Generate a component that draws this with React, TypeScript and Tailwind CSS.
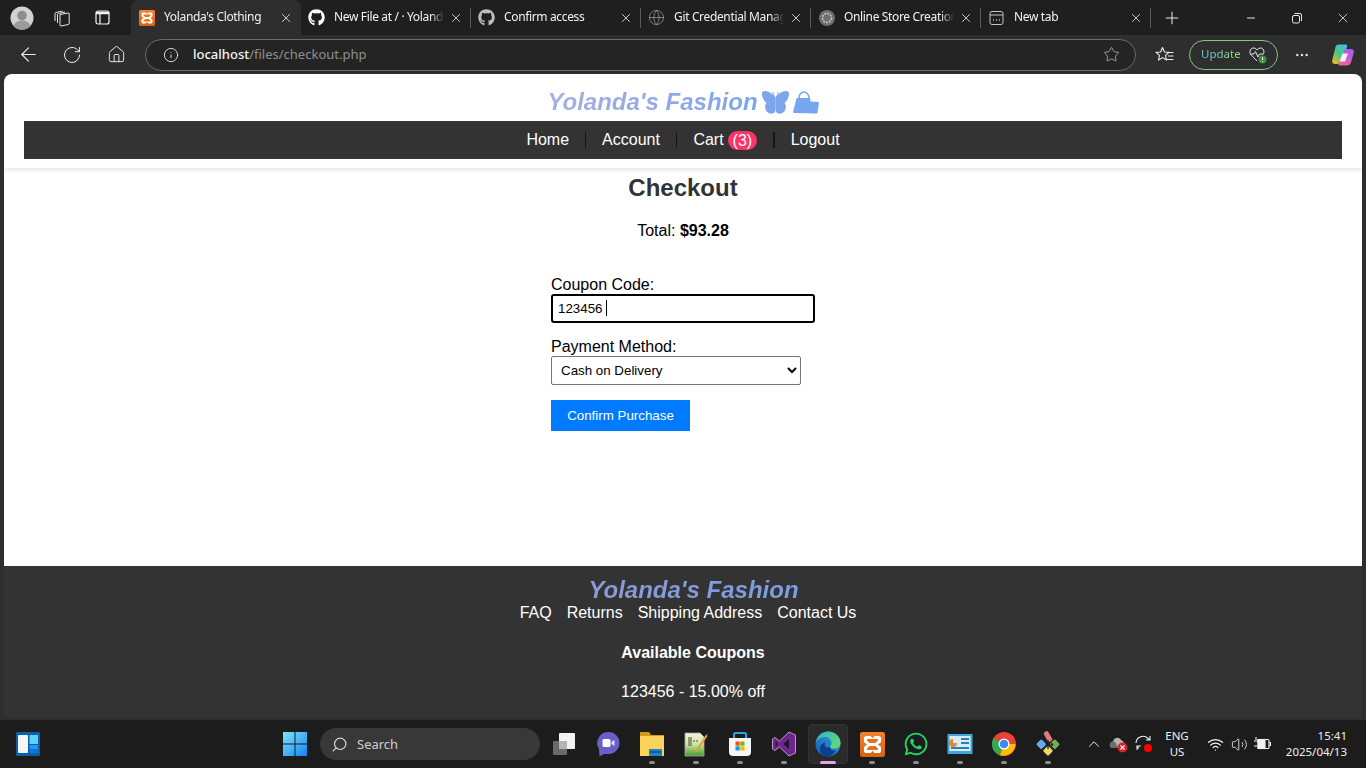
import { ArrowLeft, RotateCw, Home, Info, Star, MoreHorizontal, Plus, X, Minus, ChevronUp, Wifi, Volume2, Search, Globe } from 'lucide-react';
import { FaGithub, FaWhatsapp } from 'react-icons/fa';
import type { ReactNode } from 'react';

const chromeFont = "font-['Noto_Sans',sans-serif]";

function XamppIcon({ size = 16, id }: { size?: number; id: string }) {
  return (
    <svg width={size} height={size} viewBox="0 0 16 16">
      <defs>
        <linearGradient id={id} x1="0" y1="0" x2="0" y2="1">
          <stop offset="0" stopColor="#f9802a" />
          <stop offset="1" stopColor="#d4640f" />
        </linearGradient>
      </defs>
      <rect width="16" height="16" rx="1.500" fill={`url(#${id})`} />
      <path d="M4 2.500h2.300c.6 0 .9.400 1.200.9l.5.600.5-.6c.3-.5.6-.9 1.200-.9H12c.9 0 1.500.7 1.500 1.500v1.700c0 .7-.3 1.100-.8 1.400L11.500 8l1.200.9c.5.300.8.700.8 1.400V12c0 .8-.6 1.500-1.500 1.500H9.700c-.6 0-.9-.4-1.200-.9L8 12l-.5.600c-.3.500-.6.900-1.200.9H4c-.9 0-1.500-.7-1.500-1.500v-1.700c0-.7.3-1.100.8-1.400L4.500 8 3.300 7.100c-.5-.3-.8-.7-.8-1.400V4c0-.8.6-1.500 1.500-1.500z" fill="#fff" />
      <path d="M4.500 4.500h7v1L9.800 7H6.200L4.500 5.500zM6.200 9h3.600l1.700 1.500v1h-7v-1z" fill="#e8701a" />
    </svg>
  );
}

function ProfileIcon() {
  return (
    <svg width="24" height="24" viewBox="0 0 24 24">
      <circle cx="12" cy="12" r="11.5" fill="#d2d2d2" />
      <circle cx="12" cy="9.5" r="4.8" fill="#8e8e8e" />
      <path d="M3.500 20c1.500-4 5-5.500 8.500-5.500s7 1.500 8.500 5.500a11.500 11.500 0 0 1-17 0z" fill="#9a9a9a" />
    </svg>
  );
}

function WorkspacesIcon() {
  return (
    <svg width="18" height="18" viewBox="0 0 18 18" fill="none" stroke="#e8e8e8" strokeWidth="1">
      <path d="M7 5.500l8-1.500a1 1 0 0 1 1.200 1v9.500a1 1 0 0 1-.8 1L8 17a1 1 0 0 1-1-1z" />
      <path d="M4.500 14V5.500a1 1 0 0 1 .8-1L12 3" />
      <path d="M2 12V4.500a1 1 0 0 1 .8-1L9.500 2" />
    </svg>
  );
}

function TabActionsIcon() {
  return (
    <svg width="15" height="15" viewBox="0 0 15 15" fill="none" stroke="#f4f4f4" strokeWidth="1.200">
      <rect x="1" y="1" width="13" height="13" rx="2" />
      <path d="M1 3h13" strokeWidth="2.500" />
      <path d="M5 3v11" />
    </svg>
  );
}

function NewTabIcon() {
  return (
    <svg width="15" height="16" viewBox="0 0 15 16" fill="none" stroke="#c4c4c4" strokeWidth="1">
      <rect x="1" y="1.500" width="13" height="13" rx="2" />
      <path d="M1 5h13" />
      <path d="M4 10h1M7 10h1M10 10h1" strokeWidth="1.300" />
    </svg>
  );
}

function RestoreIcon() {
  return (
    <svg width="12" height="12" viewBox="0 0 12 12" fill="none" stroke="#e8e8e8" strokeWidth="1">
      <rect x="1.500" y="3.500" width="7" height="7.500" rx="1.500" />
      <path d="M3.500 1.500h5.500a1.500 1.500 0 0 1 1.500 1.500v6" />
    </svg>
  );
}

function OpenAiIcon() {
  return (
    <svg width="16" height="16" viewBox="0 0 16 16">
      <circle cx="8" cy="8" r="8" fill="#6f6f6f" />
      <circle cx="8" cy="8" r="4.500" fill="none" stroke="#c4c4c4" strokeWidth="1.600" strokeDasharray="2 1" />
    </svg>
  );
}

function FavoritesIcon() {
  return (
    <svg width="20" height="18" viewBox="0 0 20 18" fill="none" stroke="#ececec" strokeWidth="1.100" strokeLinejoin="round">
      <path d="M7.500 1.500 9.400 6l4.600.4-3.500 3 1 4.600-4-2.400-4 2.400 1-4.600-3.500-3L5.600 6z" />
      <path d="M14 6.500h4.500M13 10h5.500M11.500 13.500h7" />
    </svg>
  );
}

function CopilotIcon() {
  return (
    <svg width="24" height="24" viewBox="0 0 24 24">
      <defs>
        <linearGradient id="cp1" x1="0.800" y1="0" x2="0.100" y2="1">
          <stop offset="0" stopColor="#38c3e8" />
          <stop offset="0.500" stopColor="#48c97a" />
          <stop offset="1" stopColor="#f5b52e" />
        </linearGradient>
        <linearGradient id="cp2" x1="0.800" y1="0" x2="0.200" y2="1">
          <stop offset="0" stopColor="#9a5ff0" />
          <stop offset="0.600" stopColor="#d85fc0" />
          <stop offset="1" stopColor="#f2607a" />
        </linearGradient>
      </defs>
      <path d="M7.500 1.500h7c1.500 0 2 1.200 1.500 2.500l-5 15c-.5 1.500-1.500 2-3 2H4c-2 0-3.300-1.500-2.800-3.500L4.500 4c.4-1.500 1.500-2.500 3-2.500z" fill="url(#cp1)" />
      <path d="M15.500 6H20c2.200 0 3.400 1.500 2.800 3.500L20 19.500c-.6 2-2 3-4 3H9c-1.500 0-2-1-1.500-2L13 8c.4-1.300 1.200-2 2.500-2z" fill="url(#cp2)" />
      <path d="M11.500 10.500h5.500l-3 8H8.500z" fill="#ffffff" opacity="0.92" />
    </svg>
  );
}

function HeartbeatBadge() {
  return (
    <svg width="20" height="20" viewBox="0 0 20 20" fill="none">
      <path d="M9 16 2.800 9.500C.5 6.500 3 2.500 6 3c1.500.2 2.300 1 3 2 .8-1 1.700-1.800 3.200-2 3-.3 5 3.500 2.800 6.500" stroke="#e2e2e2" strokeWidth="1" />
      <path d="M2 9h4l1.500-2.500L10 12l1.500-3H15" stroke="#e2e2e2" strokeWidth="1" />
      <circle cx="14.500" cy="14.500" r="4" fill="#3f9142" />
      <path d="M14.500 12.300v2.700M14.500 16v.8" stroke="#fff" strokeWidth="1" />
    </svg>
  );
}

function Butterfly() {
  return (
    <svg width="29" height="25" viewBox="0 0 29 25" className="text-[#7da6ee]" fill="currentColor">
      <path d="M14.500 8C17 4 21 1 25 1c2.800 0 3.600 2 2.800 5-1 3.500-2.300 5.500-4.300 7 1.500 1.500 2 4.500.5 7.500-1.500 3-5.500 4-8 2.500-1.200-.8-1.500-3-1.500-5z" />
      <path d="M14.500 8C12 4 8 1 4 1 1.200 1 .4 3 1.200 6c1 3.500 2.300 5.500 4.300 7-1.500 1.500-2 4.500-.5 7.500 1.500 3 5.500 4 8 2.500 1.200-.8 1.500-3 1.500-5z" />
      <path d="M14 8l-2.500-6M15 8l2.500-6" stroke="currentColor" strokeWidth="1" fill="none" />
    </svg>
  );
}

function BagIcon() {
  return (
    <svg width="26" height="23" viewBox="0 0 26 23" className="text-[#78a6ee]">
      <path d="M6 8C6 3 8.500 1 11 1s4.500 2 5.500 7" fill="none" stroke="currentColor" strokeWidth="1.500" />
      <path d="M4.500 7H17l.5 3.500 7.500.5c.7 0 1 .5.9 1.200l-1.400 9.300c-.1.700-.5 1-1.200 1L1 22c-.7 0-1-.5-.9-1.200L3.200 8.200C3.400 7.400 3.800 7 4.500 7z" fill="currentColor" />
    </svg>
  );
}

function WindowsLogo() {
  return (
    <svg width="24" height="24" viewBox="0 0 24 24">
      <defs>
        <linearGradient id="win" x1="0" y1="0" x2="1" y2="1">
          <stop offset="0" stopColor="#7fe3fb" />
          <stop offset="1" stopColor="#0f86f0" />
        </linearGradient>
      </defs>
      <path d="M0 0h11.500v11.500H0zM12.500 0H24v11.500H12.500zM0 12.500h11.500V24H0zM12.500 12.500H24V24H12.500z" fill="url(#win)" />
    </svg>
  );
}

function WidgetsIcon() {
  return (
    <svg width="24" height="24" viewBox="0 0 24 24">
      <rect width="24" height="24" rx="1" fill="#0f5fa8" />
      <rect x="2" y="3" width="10" height="18" rx="1" fill="#f5f5f5" />
      <rect x="13.500" y="3" width="8.500" height="9" fill="#5fd0fb" />
      <rect x="13.500" y="13" width="8.500" height="4" fill="#1e9bf0" />
      <rect x="13.500" y="17" width="8.500" height="4" fill="#0f78d4" />
    </svg>
  );
}

function TaskViewIcon() {
  return (
    <svg width="24" height="24" viewBox="0 0 24 24">
      <rect x="1" y="9" width="14" height="14" rx="1" fill="#6a6a6a" />
      <rect x="7" y="1" width="16" height="16" rx="1" fill="#f2f2f2" />
      <rect x="7" y="9" width="8" height="8" fill="#b4b4b4" />
    </svg>
  );
}

function MeetIcon() {
  return (
    <svg width="24" height="26" viewBox="0 0 24 26">
      <path d="M12.500 1a11 11 0 0 1 0 22H8l-4.500 2.500L3 18A11 11 0 0 1 12.500 1z" fill="#6a5fc8" />
      <rect x="6.500" y="8" width="8" height="8" rx="1.500" fill="#fff" />
      <path d="M15.500 11l3-2v6l-3-2z" fill="#e6e2ff" />
    </svg>
  );
}

function ExplorerIcon() {
  return (
    <svg width="26" height="26" viewBox="0 0 26 26">
      <path d="M1 1h9l2 3h13v3H1z" fill="#d39a16" />
      <rect x="1" y="5" width="24" height="20" fill="#fbd35a" />
      <rect x="10" y="18" width="13" height="7" fill="#1b86cc" />
      <rect x="11" y="20" width="11" height="2" fill="#0c5c99" />
    </svg>
  );
}

function NotepadIcon() {
  return (
    <svg width="24" height="26" viewBox="0 0 24 26">
      <defs>
        <linearGradient id="padg" x1="0" y1="0" x2="0" y2="1">
          <stop offset="0" stopColor="#f2f6e4" />
          <stop offset="0.500" stopColor="#cfe29a" />
          <stop offset="1" stopColor="#3f9c2e" />
        </linearGradient>
      </defs>
      <path d="M1 2h15l4 4v19H1z" fill="url(#padg)" stroke="#a8a8a8" strokeWidth="0.800" />
      <path d="M5 6v9M7 6v9" stroke="#444" strokeWidth="1" />
      <path d="M9 10h5" stroke="#555" strokeWidth="1" strokeDasharray="2 1" />
      <path d="M22 3.500 12 19l-1.500 3 3-1.500L23.500 5z" fill="#e2a23a" />
      <path d="M22 3.500 23.500 5l.5-2.500z" fill="#a03020" />
    </svg>
  );
}

function StoreIcon() {
  return (
    <svg width="24" height="26" viewBox="0 0 24 26">
      <path d="M6 8V3.500A1.500 1.500 0 0 1 7.500 2h9A1.500 1.500 0 0 1 18 3.500V8" fill="none" stroke="#27a5e8" strokeWidth="2" />
      <path d="M1 7h22v14a4 4 0 0 1-4 4H5a4 4 0 0 1-4-4z" fill="#f5f5f5" />
      <rect x="7.500" y="10.500" width="4.200" height="4.200" fill="#f25022" />
      <rect x="12.300" y="10.500" width="4.200" height="4.200" fill="#7fba00" />
      <rect x="7.500" y="15.300" width="4.200" height="4.200" fill="#00a4ef" />
      <rect x="12.300" y="15.300" width="4.200" height="4.200" fill="#ffb900" />
    </svg>
  );
}

function VisualStudioIcon() {
  return (
    <svg width="24" height="26" viewBox="0 0 24 26">
      <path d="M17 1 23.500 4v18L17 25l-9.500-9-4.500 3.500L.5 18V8L3 6.500 7.500 10z" fill="#6e2590" stroke="#d7b8e6" strokeWidth="0.800" strokeLinejoin="round" />
      <path d="M17 8 11.500 13l5.500 5zM3.500 10v6L6 13z" fill="#1c1c1c" />
    </svg>
  );
}

function EdgeIcon() {
  return (
    <svg width="26" height="26" viewBox="0 0 26 26">
      <defs>
        <linearGradient id="edgeA" x1="0" y1="1" x2="1" y2="0">
          <stop offset="0" stopColor="#1a5bb5" />
          <stop offset="1" stopColor="#2aa6d8" />
        </linearGradient>
        <linearGradient id="edgeB" x1="0" y1="0" x2="1" y2="1">
          <stop offset="0" stopColor="#2fb6c8" />
          <stop offset="1" stopColor="#6fdc6a" />
        </linearGradient>
      </defs>
      <circle cx="13" cy="13" r="12.500" fill="url(#edgeA)" />
      <path d="M1 11C2.500 4.500 8 .5 13 .5c7 0 12.500 5 12.500 11.500 0 3.500-3 5.500-6.500 5.500-2.500 0-4-1-4-1.800 0-.8 1.500-1.200 1.500-3.500C16.500 8.500 13.500 6 10 6 6 6 2.500 8 1 11z" fill="url(#edgeB)" />
      <path d="M15 15.500c-.5 3 2.500 5 6 3.800-2 3.600-5.500 6.200-9 6.200-4 0-7-3.500-7-8 0-3 2-5.500 5-5.500-1 4 2 6 5 3.500z" fill="#0b3f8f" />
    </svg>
  );
}

function ChromeIcon() {
  return (
    <svg width="24" height="24" viewBox="0 0 24 24">
      <circle cx="12" cy="12" r="12" fill="#ea4335" />
      <path d="M12 12 1.600 6A12 12 0 0 0 8 23.300z" fill="#34a853" />
      <path d="M12 12h11.500A12 12 0 0 1 8 23.300L12 12z" fill="#fbbc04" />
      <circle cx="12" cy="12" r="5.500" fill="#fff" />
      <circle cx="12" cy="12" r="4.300" fill="#4285f4" />
    </svg>
  );
}

function ReportIcon() {
  return (
    <svg width="26" height="24" viewBox="0 0 26 24">
      <rect x="0.500" y="2" width="25" height="20" fill="#3fa7dc" />
      <rect x="2.500" y="4" width="21" height="15" fill="#d7eefa" />
      <path d="M6 7a4 4 0 1 0 4 4H6z" fill="#e8842c" />
      <rect x="14" y="6" width="8" height="2" fill="#2a80b8" />
      <rect x="14" y="10" width="8" height="2" fill="#2a80b8" />
      <rect x="4" y="15" width="18" height="2" fill="#2a80b8" />
    </svg>
  );
}

function GitExtIcon() {
  return (
    <svg width="26" height="26" viewBox="0 0 26 26">
      <rect x="2.500" y="9.500" width="7.500" height="7.500" rx="1.500" transform="rotate(45 6.250 13.250)" fill="#6aa5f0" />
      <rect x="16" y="9.500" width="7.500" height="7.500" rx="1.500" transform="rotate(45 19.750 13.250)" fill="#6fb04f" />
      <rect x="9.250" y="16" width="7.500" height="7.500" rx="1.500" transform="rotate(45 13 19.750)" fill="#f0d56a" />
      <rect x="10.500" y="0" width="5" height="11" rx="2" transform="rotate(-30 13 5.500)" fill="#e27a80" />
      <path d="M13 9v9" stroke="#222" strokeWidth="1.300" />
      <circle cx="13" cy="12" r="1.500" fill="#222" />
      <circle cx="17" cy="13.500" r="1.300" fill="#222" />
    </svg>
  );
}

function OneDriveOff() {
  return (
    <svg width="20" height="20" viewBox="0 0 20 20">
      <path d="M1 12a3.500 3.500 0 0 1 3-4.500 4.500 4.500 0 0 1 8.500-1A3.500 3.500 0 0 1 15 11v3H4a3 3 0 0 1-3-2z" fill="#b4b4b4" />
      <path d="M1 12a3.500 3.500 0 0 1 3-4.500c1-.2 2 .2 2.500 1L9 14H4a3 3 0 0 1-3-2z" fill="#6c6c6c" />
      <circle cx="13.500" cy="13.500" r="5" fill="#d8232a" />
      <path d="M11.500 11.500l4 4M15.500 11.500l-4 4" stroke="#fff" strokeWidth="1.100" />
    </svg>
  );
}

function SyncIcon() {
  return (
    <svg width="20" height="20" viewBox="0 0 20 20" fill="none" stroke="#f0f0f0" strokeWidth="1.100">
      <path d="M2 9a7 7 0 0 1 12-4.500l2 1.500M16 2v4h-4" />
      <path d="M3 16v-4h4M3 12l2 2.500" />
      <circle cx="14" cy="14" r="4" fill="#f00" stroke="none" />
    </svg>
  );
}

function BatteryPlug() {
  return (
    <svg width="18" height="16" viewBox="0 0 18 16" fill="none" stroke="#f0f0f0" strokeWidth="1.100">
      <rect x="5" y="3.500" width="11" height="9" rx="1" />
      <rect x="5" y="3.500" width="7" height="9" fill="#f0f0f0" />
      <path d="M16 6.500h1.500v3H16M1 5h4M1 10h3M3 1v3" />
    </svg>
  );
}

const tabs: { title: string; icon: ReactNode; active?: boolean }[] = [
  { title: "Yolanda's Clothing", icon: <XamppIcon id="xt" />, active: true },
  { title: 'New File at / · Yolanda', icon: <FaGithub className="text-white" size={17} /> },
  { title: 'Confirm access', icon: <FaGithub className="text-[#bdbdbd]" size={17} /> },
  { title: 'Git Credential Manager', icon: <Globe className="text-[#a0a0a0]" size={17} strokeWidth={1} /> },
  { title: 'Online Store Creation', icon: <OpenAiIcon /> },
  { title: 'New tab', icon: <NewTabIcon /> },
];

function Tab({ title, icon, active }: { title: string; icon: ReactNode; active?: boolean }) {
  return (
    <div
      className={`relative flex h-[35px] w-[170px] shrink-0 items-center pl-[7px] pr-[8px] ${
        active ? 'rounded-t-[8px] bg-[#2e2e2e]' : ''
      }`}
    >
      <span className="flex w-[17px] shrink-0 justify-center">{icon}</span>
      <span className="-mt-px ml-[9px] w-[110px] overflow-hidden whitespace-nowrap text-[12px] tracking-[-0.35px] text-[#f2f2f2] [mask-image:linear-gradient(to_right,black_88%,transparent)]">
        {title}
      </span>
      <X className="ml-auto text-[#f0f0f0]" size={14} strokeWidth={1.4} />
      {!active && <span className="absolute right-0 top-[8px] h-[20px] w-px bg-[#5a5a5a]" />}
    </div>
  );
}

function TitleBar() {
  return (
    <div className="flex h-[35px] items-center bg-[#1f1f1f]">
      <div className="ml-[10px] flex w-[121px] items-center">
        <ProfileIcon />
        <span className="ml-[19px] flex"><WorkspacesIcon /></span>
        <span className="ml-[24px] flex"><TabActionsIcon /></span>
      </div>
      <div className="flex">
        {tabs.map((t) => (
          <Tab key={t.title} title={t.title} icon={t.icon} active={t.active} />
        ))}
      </div>
      <Plus className="ml-[11px] text-[#eaeaea]" size={20} strokeWidth={1.2} />
      <div className="ml-auto flex items-center">
        <span className="flex w-[46px] justify-center"><Minus className="text-[#e8e8e8]" size={12} /></span>
        <span className="flex w-[46px] justify-center"><RestoreIcon /></span>
        <span className="flex w-[46px] justify-center"><X className="text-[#e8e8e8]" size={16} strokeWidth={1.2} /></span>
      </div>
    </div>
  );
}

function AddressBar() {
  return (
    <div className="flex h-[39px] items-center bg-[#2e2e2e]">
      <div className="flex w-[145px] items-center">
        <span className="flex w-[56px] justify-center"><ArrowLeft className="text-[#ececec]" size={23} strokeWidth={1.2} /></span>
        <span className="-ml-[6px] flex w-[44px] justify-center"><RotateCw className="text-[#ececec]" size={20} strokeWidth={1.2} /></span>
        <span className="flex w-[44px] justify-center"><Home className="text-[#ececec]" size={19} strokeWidth={1.2} /></span>
      </div>
      <div className="flex h-[32px] w-[991px] items-center rounded-full border border-[#6a6a6a] bg-[#242424] pl-[17px] pr-[15px]">
        <Info className="text-[#ececec]" size={16} strokeWidth={1.3} />
        <span className="ml-[14px] text-[13px] font-medium text-[#f5f5f5]">localhost</span>
        <span className="text-[13px] text-[#8f8f8f]">/files/checkout.php</span>
        <Star className="ml-auto text-[#bcbcbc]" size={17} strokeWidth={1.1} />
      </div>
      <span className="ml-[19px] flex"><FavoritesIcon /></span>
      <div className="ml-[14px] flex h-[30px] w-[89px] items-center rounded-full border border-[#84c488] pl-[11px]">
        <span className="-mt-px bg-gradient-to-r from-[#6cc7e0] to-[#9ad86c] bg-clip-text text-[11.5px] text-transparent">Update</span>
        <span className="ml-[7px] flex"><HeartbeatBadge /></span>
      </div>
      <MoreHorizontal className="ml-[16px] text-[#ececec]" size={16} strokeWidth={1.6} />
      <span className="ml-[21px] flex"><CopilotIcon /></span>
    </div>
  );
}

function GradientTitle({ className }: { className: string }) {
  return (
    <span className={`bg-clip-text text-[24px] font-bold italic leading-[28px] text-transparent ${className}`}>
      Yolanda's Fashion
    </span>
  );
}

function Header() {
  return (
    <header className="relative z-10 bg-white px-5 pb-[9px] shadow-[0_2px_4px_rgba(0,0,0,0.1)]">
      <div className="flex h-[47px] items-center justify-center pt-[9px]">
        <GradientTitle className="bg-gradient-to-r from-[#a9aee0] to-[#7ca6ec]" />
        <span className="ml-[3px] flex"><Butterfly /></span>
        <span className="ml-[3px] flex"><BagIcon /></span>
      </div>
      <nav className="flex h-[38px] items-center justify-center bg-[#333333] text-[16px] text-white">
        <span>Home</span>
        <span className="mx-[16px] h-[16px] w-px bg-[#151515]" />
        <span>Account</span>
        <span className="mx-[16px] h-[16px] w-[1.5px] bg-[#151515]" />
        <span>Cart</span>
        <span className="ml-[4px] h-[19px] rounded-full bg-[#fb3368] px-[5px] leading-[19px]">(3)</span>
        <span className="mx-[16px] h-[16px] w-[1.5px] bg-[#151515]" />
        <span>Logout</span>
      </nav>
    </header>
  );
}

function CheckoutForm() {
  return (
    <main className="flex-1 bg-white text-black">
      <h2 className="mt-[6px] text-center text-[24px] font-bold leading-[28px] text-[#333333]">Checkout</h2>
      <p className="mt-[20px] text-center text-[16px] leading-[18px]">
        Total: <strong>$93.28</strong>
      </p>
      <form className="ml-[547px] mt-[36px] text-[16px]">
        <label className="block leading-[18px]">Coupon Code:</label>
        <div className="relative w-[264px]">
          <input
            defaultValue="123456"
            className="block h-[29px] w-full rounded-[3px] border-2 border-black px-[5px] text-[13.33px] outline-none"
          />
          <span className="absolute left-[55px] top-[6px] h-[16px] w-px bg-black" />
        </div>
        <label className="mt-[15px] block leading-[18px]">Payment Method:</label>
        <select
          defaultValue="cod"
          className="block h-[29px] w-[250px] appearance-auto rounded-[2px] border border-[#767676] bg-white px-[5px] text-[13.33px]"
        >
          <option value="cod">Cash on Delivery</option>
        </select>
        <button type="button" className="mt-[15px] block h-[31px] w-[139px] bg-[#007bff] text-[13.33px] text-white">
          Confirm Purchase
        </button>
      </form>
    </main>
  );
}

function Footer() {
  return (
    <footer className="flex h-[152px] flex-col items-center bg-[#333333] text-[16px] text-white">
      <div className="ml-[21px] mt-[10px] flex h-[28px]">
        <GradientTitle className="bg-gradient-to-r from-[#8b9ad6] to-[#7b9ee2]" />
      </div>
      <div className="ml-[10px] flex gap-[15px] leading-[18px]">
        <span>FAQ</span>
        <span>Returns</span>
        <span>Shipping Address</span>
        <span>Contact Us</span>
      </div>
      <p className="ml-[20px] mt-[22px] font-bold leading-[18px]">Available Coupons</p>
      <p className="ml-[20px] mt-[21px] leading-[18px]">123456 - 15.00% off</p>
    </footer>
  );
}

const taskApps: { key: string; node: ReactNode; dot: boolean; active?: boolean }[] = [
  { key: 'taskview', node: <TaskViewIcon />, dot: false },
  { key: 'meet', node: <MeetIcon />, dot: false },
  { key: 'explorer', node: <ExplorerIcon />, dot: true },
  { key: 'notepad', node: <NotepadIcon />, dot: true },
  { key: 'store', node: <StoreIcon />, dot: true },
  { key: 'vs', node: <VisualStudioIcon />, dot: true },
  { key: 'edge', node: <EdgeIcon />, dot: true, active: true },
  { key: 'xampp', node: <XamppIcon size={25} id="xb" />, dot: true },
  { key: 'whatsapp', node: <FaWhatsapp className="text-[#25d366]" size={26} />, dot: true },
  { key: 'report', node: <ReportIcon />, dot: true },
  { key: 'chrome', node: <ChromeIcon />, dot: true },
  { key: 'git', node: <GitExtIcon />, dot: true },
];

function Taskbar() {
  return (
    <div className="flex h-[48px] items-center bg-[#1c1c1c]">
      <span className="ml-[16px] flex"><WidgetsIcon /></span>
      <span className="ml-[243px] flex"><WindowsLogo /></span>
      <div className="ml-[13px] flex h-[32px] w-[220px] items-center rounded-full bg-[#383838] pl-[11px]">
        <Search className="-scale-x-100 text-[#dcdcdc]" size={17} strokeWidth={1.6} />
        <span className="ml-[9px] mt-px text-[13px] text-[#d0d0d0]">Search</span>
      </div>
      <div className="ml-[2px] flex">
        {taskApps.map((app) => (
          <div key={app.key} className="relative flex h-[40px] w-[44px] items-center justify-center">
            {app.active && <span className="absolute left-[2px] top-0 h-[40px] w-[40px] rounded-[4px] border border-[#333333] bg-[#2a2a2a]" />}
            <span className="relative flex">{app.node}</span>
            {app.dot && !app.active && <span className="absolute bottom-0 left-[19px] h-[3px] w-[6px] rounded-full bg-[#8c8c8c]" />}
            {app.active && <span className="absolute bottom-0 left-[14px] h-[3px] w-[16px] rounded-full bg-[#e3a3e8]" />}
          </div>
        ))}
      </div>
      <ChevronUp className="ml-[15px] text-[#f0f0f0]" size={18} strokeWidth={1.3} />
      <span className="ml-[6px] flex"><OneDriveOff /></span>
      <span className="ml-[5px] flex"><SyncIcon /></span>
      <div className="ml-[6px] w-[34px] text-center text-[11.5px] leading-[16px] text-[#f0f0f0]">
        <div>ENG</div>
        <div>US</div>
      </div>
      <Wifi className="ml-[13px] text-[#f0f0f0]" size={17} strokeWidth={1.7} />
      <Volume2 className="ml-[7px] text-[#f0f0f0]" size={17} strokeWidth={1.2} />
      <span className="ml-[5px] flex"><BatteryPlug /></span>
      <div className="ml-auto mr-[19px] text-right text-[11.5px] leading-[16px] text-[#f0f0f0]">
        <div>15:41</div>
        <div>2025/04/13</div>
      </div>
    </div>
  );
}

export default function App() {
  return (
    <div className="flex h-[768px] w-[1366px] flex-col overflow-hidden bg-[#2e2e2e] font-['Liberation_Sans',Arial,sans-serif]">
      <div className={chromeFont}>
        <TitleBar />
        <AddressBar />
      </div>
      <div className="mx-[4px] flex h-[644px] flex-col overflow-hidden rounded-t-[8px]">
        <Header />
        <CheckoutForm />
        <Footer />
      </div>
      <div className="h-[2px]" />
      <div className={chromeFont}>
        <Taskbar />
      </div>
    </div>
  );
}
